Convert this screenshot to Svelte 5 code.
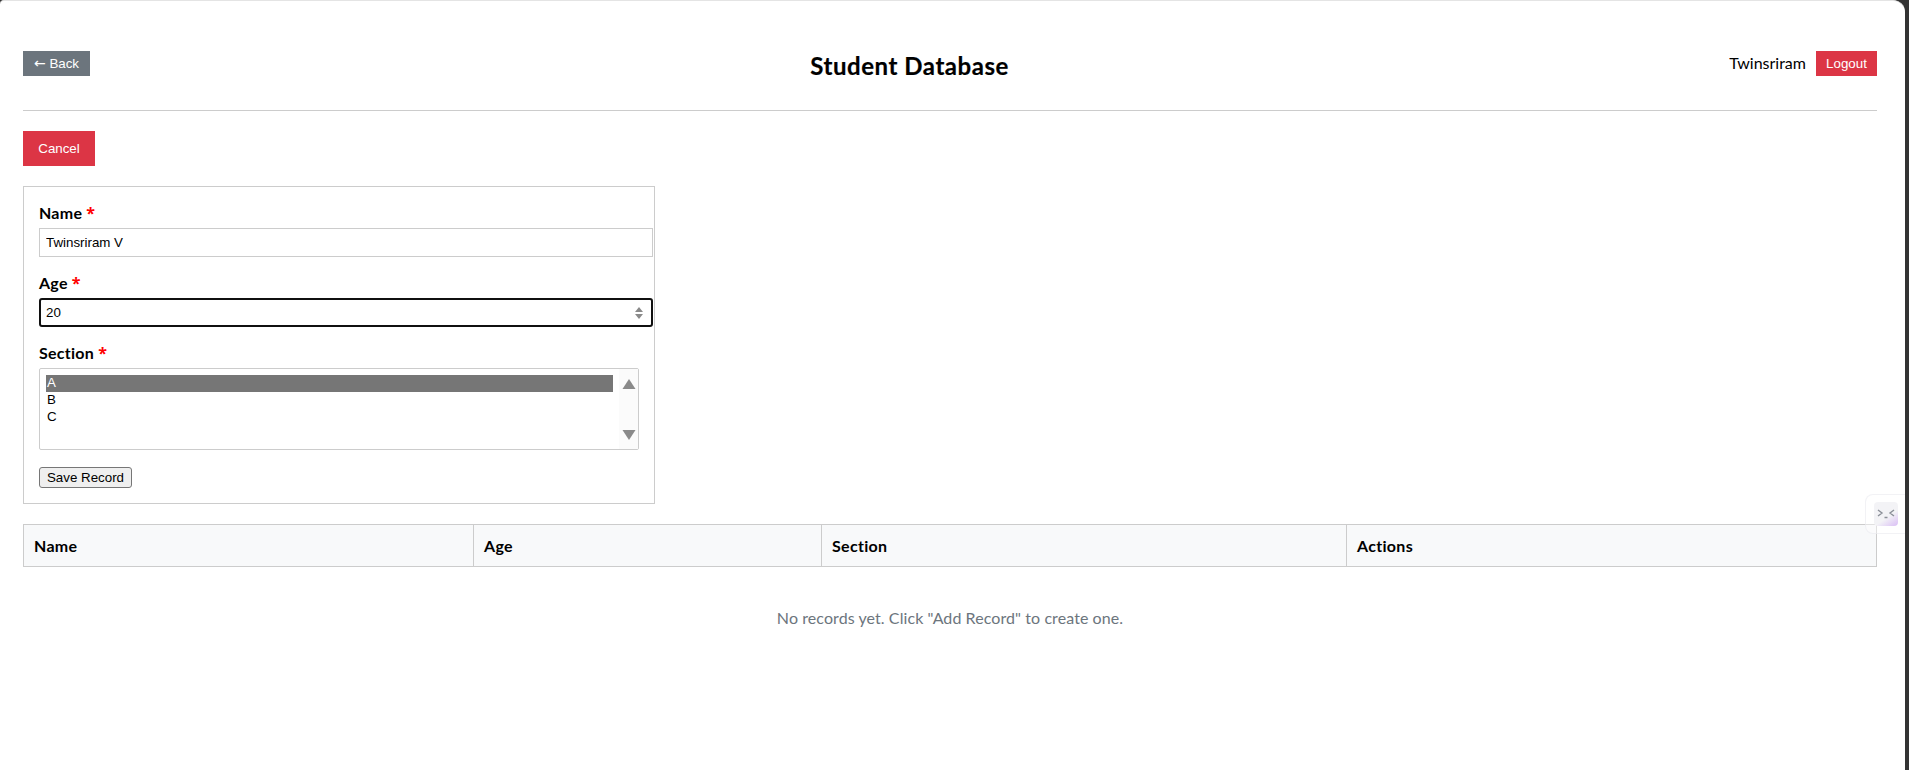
<script lang="ts">
	const columns = ['Name', 'Age', 'Section', 'Actions'];
	const sections = ['A', 'B', 'C'];
	let name = $state('Twinsriram V');
	let age = $state('20');
	let selected = $state('A');
</script>

<div class="window">
	<main class="page">
		<header class="topbar">
			<button class="btn back" type="button"><span class="arrow">←</span> Back</button>
			<h1>Student Database</h1>
			<div class="user">
				<span class="username">Twinsriram</span>
				<button class="btn logout" type="button">Logout</button>
			</div>
		</header>

		<button class="btn cancel" type="button">Cancel</button>

		<form class="record-form" onsubmit={(e) => e.preventDefault()}>
			<label for="name">Name <em>*</em></label>
			<input id="name" type="text" bind:value={name} />

			<label for="age">Age <em>*</em></label>
			<div class="age-field">
				<input id="age" type="text" bind:value={age} />
				<svg class="spinner" width="14" height="14" viewBox="0 0 14 14" aria-hidden="true">
					<path d="M7 1 11 6H3Z M7 13 3 8H11Z" fill="#8a8a8a" />
				</svg>
			</div>

			<label for="section">Section <em>*</em></label>
			<div class="listbox" id="section" role="listbox">
				<div class="options">
					{#each sections as s}
						<button
							class="option"
							class:selected={selected === s}
							type="button"
							onclick={() => (selected = s)}>{s}</button
						>
					{/each}
				</div>
				<div class="scrollbar" aria-hidden="true">
					<svg width="16" height="12" viewBox="0 0 16 12"><path d="M8 0 14.5 10H1.5Z" fill="#8a8a8a" /></svg>
					<svg width="16" height="12" viewBox="0 0 16 12"><path d="M8 12 1.5 2H14.5Z" fill="#8a8a8a" /></svg>
				</div>
			</div>

			<button class="save" type="submit">Save Record</button>
		</form>

		<div class="table">
			{#each columns as col}
				<div class="th">{col}</div>
			{/each}
		</div>
		<p class="empty">No records yet. Click "Add Record" to create one.</p>
	</main>

	<aside class="widget" aria-hidden="true">
		<div class="widget-icon">
			<svg width="20" height="12" viewBox="0 0 20 12" fill="none" stroke="#8b8f98" stroke-width="1.4">
				<path d="M2 2 6 5 2 8M18 2 14 5 18 8M8.5 9.5h3" />
			</svg>
		</div>
	</aside>
</div>

<style>
	:global(body) {
		margin: 0;
		background: #333;
	}

	.window {
		position: relative;
		box-sizing: border-box;
		height: 770px;
		margin-right: 4px;
		border-top: 1px solid #e4e4e4;
		border-top-left-radius: 4px;
		border-top-right-radius: 12px;
		background: #fff;
		overflow: hidden;
		font-family: Lato, 'Open Sans', sans-serif;
		color: #000;
	}

	.page {
		padding: 0 28px 0 23px;
	}

	.topbar {
		display: flex;
		justify-content: space-between;
		align-items: center;
		box-sizing: border-box;
		height: 110px;
		padding-top: 16px;
		border-bottom: 1px solid #ccc;
	}

	h1 {
		margin: 4px 0 0;
		font-size: 24px;
		font-weight: 700;
		line-height: 32px;
		letter-spacing: 0.55px;
		-webkit-text-stroke: 0.2px #000;
	}

	.btn {
		border: none;
		color: #fff;
		font-family: 'Liberation Sans', Arial, sans-serif;
		font-size: 13.33px;
		cursor: pointer;
	}

	.arrow {
		font-family: 'DejaVu Sans', sans-serif;
		font-size: 14px;
		line-height: 1;
	}

	.back {
		width: 67px;
		height: 25px;
		padding: 0;
		background: #6c757d;
	}

	.user {
		display: flex;
		align-items: center;
		gap: 10px;
		font-size: 16px;
		line-height: 22px;
	}

	.username {
		margin-bottom: 2px;
	}

	.logout {
		width: 61px;
		height: 25px;
		padding: 0;
		background: #dc3545;
	}

	.cancel {
		display: block;
		width: 72px;
		height: 35px;
		margin-top: 20px;
		padding: 0;
		background: #dc3545;
	}

	.record-form {
		box-sizing: border-box;
		width: 632px;
		height: 318px;
		margin-top: 20px;
		padding: 15px 0 0 15px;
		border: 1px solid #ccc;
	}

	label {
		display: block;
		height: 24px;
		margin-bottom: 2px;
		font-size: 16px;
		font-weight: 700;
		line-height: 22px;
		letter-spacing: 0.25px;
	}

	em {
		color: #f00;
		font-family: 'Open Sans', sans-serif;
		font-style: normal;
	}

	input {
		display: block;
		box-sizing: border-box;
		width: 614px;
		height: 29px;
		margin: 0 0 15px;
		padding: 0 6px;
		border: 1px solid #ccc;
		color: #000;
		font-family: 'Liberation Sans', Arial, sans-serif;
		font-size: 13.33px;
		outline: none;
	}

	.age-field {
		position: relative;
		width: 614px;
	}

	#age {
		border: 2px solid #101010;
		border-radius: 3px;
		padding: 0 5px;
	}

	.spinner {
		position: absolute;
		top: 8px;
		right: 7px;
	}

	.listbox {
		box-sizing: border-box;
		display: flex;
		width: 600px;
		height: 82px;
		border: 1px solid #ccc;
		border-radius: 2px;
		font-family: 'Liberation Sans', Arial, sans-serif;
		font-size: 13.33px;
	}

	.options {
		flex: 1;
		padding: 6px 0 0 6px;
	}

	.option {
		display: block;
		box-sizing: border-box;
		width: 567px;
		height: 17px;
		padding: 0 0 2px 1px;
		border: none;
		background: none;
		color: #000;
		font: inherit;
		line-height: 15px;
		text-align: left;
	}

	.option.selected {
		background: #767676;
		color: #fff;
	}

	.scrollbar {
		display: flex;
		flex-direction: column;
		justify-content: space-between;
		width: 19px;
		padding: 10px 0 9px;
		background: #fbfbfb;
	}

	.scrollbar svg {
		margin: 0 auto;
	}

	.save {
		display: block;
		box-sizing: border-box;
		width: 93px;
		height: 21px;
		margin-top: 17px;
		padding: 0;
		border: 1px solid #767676;
		border-radius: 3px;
		background: #efefef;
		color: #000;
		font-family: 'Liberation Sans', Arial, sans-serif;
		font-size: 13.33px;
	}

	.table {
		box-sizing: border-box;
		display: grid;
		grid-template-columns: 450px 348px 525px 1fr;
		height: 43px;
		margin-top: 20px;
		border: 1px solid #ccc;
		background: #f8f9fa;
	}

	.th {
		padding: 0 10px;
		border-right: 1px solid #ccc;
		font-size: 16px;
		font-weight: 700;
		line-height: 41px;
		letter-spacing: 0.3px;
	}

	.th:last-child {
		border-right: none;
	}

	.empty {
		margin: 39px 0 0;
		color: #6c757d;
		font-size: 16px;
		line-height: 24px;
		letter-spacing: 0.08px;
		text-align: center;
	}

	.widget {
		position: absolute;
		top: 493px;
		right: -28px;
		width: 50px;
		height: 24px;
		padding: 7px 8px;
		border: 1px solid rgba(230, 230, 236, 0.5);
		border-radius: 8px;
		background: rgba(255, 255, 255, 0.4);
	}

	.widget-icon {
		display: flex;
		align-items: center;
		justify-content: center;
		width: 24px;
		height: 24px;
		border-radius: 4px;
		background: linear-gradient(145deg, #f3f3f6 60%, #d9bdf5);
	}
</style>
